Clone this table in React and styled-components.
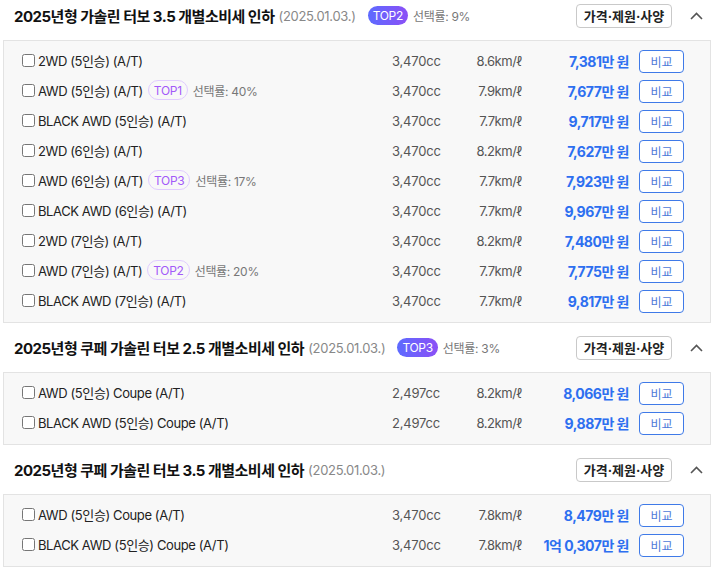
import React from "react";
import styled, { createGlobalStyle } from "styled-components";

const Global = createGlobalStyle`
  html, body { margin: 0; padding: 0; background: #fff; }
  body {
    font-family: Inter, "Noto Sans CJK KR", "Noto Sans", sans-serif;
    color: #222;
    overflow: hidden;
  }
`;

const Page = styled.div`
  margin-top: -9px;
  padding: 0 7px 0 3px;
`;

const Section = styled.section`
  display: flex;
  flex-direction: column;
`;

const Header = styled.div`
  height: 49px;
  display: flex;
  align-items: center;
  padding: 0 7px 0 11px;
`;

const Title = styled.h3`
  margin: 0;
  font-size: 15px;
  font-weight: 700;
  color: #111;
  letter-spacing: -0.5px;
`;

const DateText = styled.span`
  margin-left: 4px;
  font-size: 13px;
  letter-spacing: -0.3px;
  color: #888;
`;

const FilledBadge = styled.span`
  margin-left: 12px;
  height: 19px;
  padding: 0 5px;
  border-radius: 10px;
  background: linear-gradient(90deg, #5d6bff 0%, #8b4ff6 100%);
  color: #fff;
  font-size: 12px;
  letter-spacing: -0.3px;
  display: inline-flex;
  align-items: center;
`;

const OutlineBadge = styled.span`
  margin-left: 5px;
  height: 18px;
  padding: 0 5px;
  border-radius: 10px;
  border: 1px solid #e0ccff;
  color: #a35af8;
  font-size: 12px;
  letter-spacing: -0.3px;
  display: inline-flex;
  align-items: center;
`;

const Rate = styled.span`
  margin-left: 5px;
  font-size: 12px;
  letter-spacing: -0.3px;
  color: #777;
`;

const Spacer = styled.div`
  flex: 1;
`;

const SpecButton = styled.button`
  height: 24px;
  width: 96px;
  border: 1px solid #c9c9c9;
  border-radius: 4px;
  background: #fff;
  font-family: inherit;
  font-size: 13px;
  font-weight: 700;
  color: #222;
  padding: 0;
  cursor: pointer;
`;

const Chevron = styled.button`
  margin-left: 16px;
  width: 16px;
  height: 16px;
  padding: 0;
  border: 0;
  background: none;
  display: flex;
  align-items: center;
  justify-content: center;
`;

const Panel = styled.div`
  background: #f8f8f8;
  border: 1px solid #e3e3e3;
  padding: 5px 0 6px;
`;

const Row = styled.div`
  height: 30px;
  display: flex;
  align-items: center;
  padding: 0 26px 0 18px;
`;

const NameCell = styled.label`
  flex: 1;
  display: flex;
  align-items: center;
  font-size: 13px;
  letter-spacing: -0.4px;
  color: #222;
  margin-top: -2px;
`;

const Check = styled.input`
  width: 13px;
  height: 13px;
  margin: 0 3px 0 0;
`;

const Cc = styled.span`
  width: 70px;
  font-size: 13px;
  letter-spacing: -0.2px;
  color: #555;
`;

const Km = styled.span`
  width: 60px;
  text-align: right;
  font-size: 13px;
  letter-spacing: -0.4px;
  color: #555;
`;

const Price = styled.span`
  width: 107px;
  text-align: right;
  font-size: 14px;
  font-weight: 700;
  letter-spacing: -0.5px;
  color: #2d6ff0;
`;

const CompareButton = styled.button`
  margin-left: 10px;
  width: 45px;
  height: 23px;
  border: 1px solid #3f7ae8;
  border-radius: 4px;
  background: #fff;
  color: #4d79d8;
  font-family: inherit;
  font-size: 12px;
  padding: 0;
  cursor: pointer;
`;

const sections = [
  {
    title: "2025년형 가솔린 터보 3.5 개별소비세 인하",
    badge: { top: "TOP2", rate: "9%" },
    rows: [
      ["2WD (5인승) (A/T)", "3,470cc", "8.6km/ℓ", "7,381만 원"],
      ["AWD (5인승) (A/T)", "3,470cc", "7.9km/ℓ", "7,677만 원", { top: "TOP1", rate: "40%" }],
      ["BLACK AWD (5인승) (A/T)", "3,470cc", "7.7km/ℓ", "9,717만 원"],
      ["2WD (6인승) (A/T)", "3,470cc", "8.2km/ℓ", "7,627만 원"],
      ["AWD (6인승) (A/T)", "3,470cc", "7.7km/ℓ", "7,923만 원", { top: "TOP3", rate: "17%" }],
      ["BLACK AWD (6인승) (A/T)", "3,470cc", "7.7km/ℓ", "9,967만 원"],
      ["2WD (7인승) (A/T)", "3,470cc", "8.2km/ℓ", "7,480만 원"],
      ["AWD (7인승) (A/T)", "3,470cc", "7.7km/ℓ", "7,775만 원", { top: "TOP2", rate: "20%" }],
      ["BLACK AWD (7인승) (A/T)", "3,470cc", "7.7km/ℓ", "9,817만 원"],
    ],
  },
  {
    title: "2025년형 쿠페 가솔린 터보 2.5 개별소비세 인하",
    badge: { top: "TOP3", rate: "3%" },
    rows: [
      ["AWD (5인승) Coupe (A/T)", "2,497cc", "8.2km/ℓ", "8,066만 원"],
      ["BLACK AWD (5인승) Coupe (A/T)", "2,497cc", "8.2km/ℓ", "9,887만 원"],
    ],
  },
  {
    title: "2025년형 쿠페 가솔린 터보 3.5 개별소비세 인하",
    rows: [
      ["AWD (5인승) Coupe (A/T)", "3,470cc", "7.8km/ℓ", "8,479만 원"],
      ["BLACK AWD (5인승) Coupe (A/T)", "3,470cc", "7.8km/ℓ", "1억 0,307만 원"],
    ],
  },
];

function ChevronUp() {
  return (
    <svg width="13" height="8" viewBox="0 0 13 8" fill="none">
      <path d="M1 7L6.5 1.5L12 7" stroke="#555" strokeWidth="1.6" />
    </svg>
  );
}

export default function App() {
  return (
    <>
      <Global />
      <Page>
        {sections.map((s, i) => (
          <Section key={i}>
            <Header>
              <Title>{s.title}</Title>
              <DateText>(2025.01.03.)</DateText>
              {s.badge && (
                <>
                  <FilledBadge>{s.badge.top}</FilledBadge>
                  <Rate>선택률: {s.badge.rate}</Rate>
                </>
              )}
              <Spacer />
              <SpecButton>가격·제원·사양</SpecButton>
              <Chevron aria-label="접기">
                <ChevronUp />
              </Chevron>
            </Header>
            <Panel>
              {s.rows.map((r, j) => (
                <Row key={j}>
                  <NameCell>
                    <Check type="checkbox" />
                    {r[0]}
                    {r[4] && (
                      <>
                        <OutlineBadge>{r[4].top}</OutlineBadge>
                        <Rate>선택률: {r[4].rate}</Rate>
                      </>
                    )}
                  </NameCell>
                  <Cc>{r[1]}</Cc>
                  <Km>{r[2]}</Km>
                  <Price>{r[3]}</Price>
                  <CompareButton>비교</CompareButton>
                </Row>
              ))}
            </Panel>
          </Section>
        ))}
      </Page>
    </>
  );
}
